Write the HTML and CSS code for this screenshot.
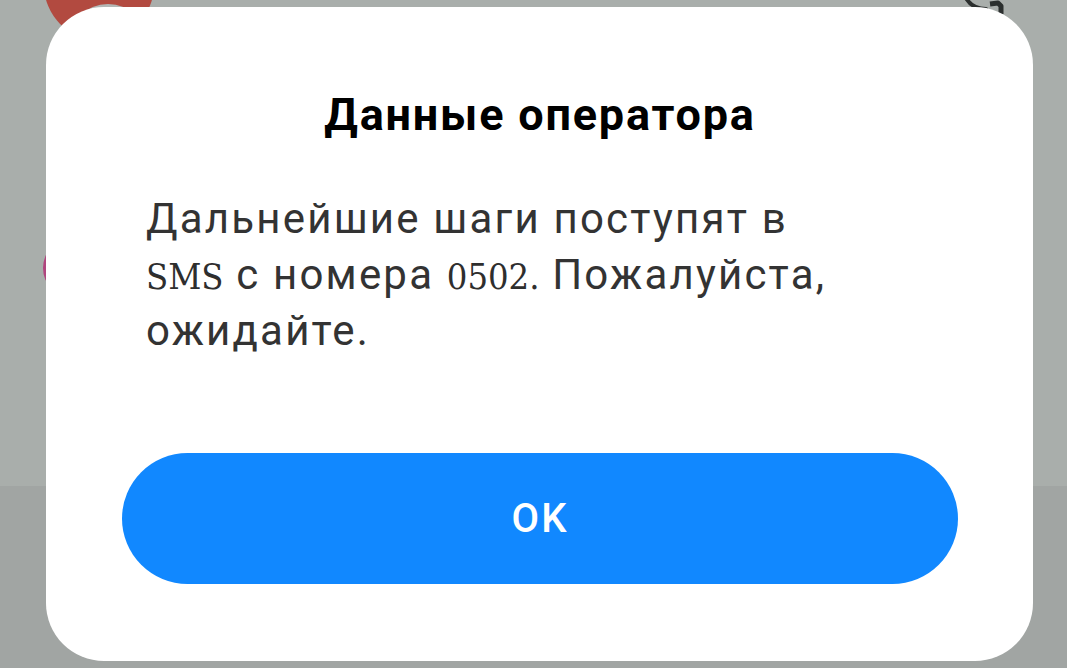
FILE: index.html
```html
<!DOCTYPE html>
<html lang="ru">
<head>
    <meta charset="UTF-8">
    <meta name="viewport" content="width=device-width, initial-scale=1.0">
    <title>Данные оператора</title>
    <link rel="stylesheet" href="styles.css">
</head>
<body>

<div class="screen">
    <div class="screen-top">
        <span class="avatar avatar-red"><span class="avatar-inner"></span></span>
        <span class="avatar avatar-pink"></span>
        <svg class="corner-icon" width="60" height="24" viewBox="0 0 60 24">
            <path d="M4 -6 C8 4 16 9 26 9" fill="none" stroke="#2b2f2e" stroke-width="4" stroke-linecap="round"/>
            <path d="M30 4 L38 3 L41 6 L41 14" fill="none" stroke="#2b2f2e" stroke-width="5" stroke-linejoin="round"/>
        </svg>
    </div>
    <div class="screen-bottom"></div>
</div>

<div class="dialog">
    <h2 class="dialog-title">Данные оператора</h2>
    <p class="dialog-text">Дальнейшие шаги поступят в <span class="alt">SMS</span> с номера <span class="alt">0502.</span> Пожалуйста, ожидайте.</p>
    <button class="dialog-btn">OK</button>
</div>

</body>
</html>
```

FILE: styles.css
```css
body {
    margin: 0;
    font-family: Roboto, "Noto Sans", sans-serif;
    overflow: hidden;
}
.screen {
    height: 668px;
    display: flex;
    flex-direction: column;
}
.screen-top {
    position: relative;
    height: 486px;
    background-color: #a9aeab;
}
.screen-bottom {
    flex: 1;
    background-color: #a1a5a3;
}
.avatar {
    position: absolute;
    border-radius: 50%;
}
.avatar-red {
    left: 44px;
    top: -70px;
    width: 110px;
    height: 110px;
    background-color: #b24a40;
}
.avatar-inner {
    position: absolute;
    left: 24px;
    top: 74px;
    width: 80px;
    height: 80px;
    border-radius: 50%;
    background-color: #b3b7b5;
}
.avatar-pink {
    left: 43px;
    top: 238px;
    width: 60px;
    height: 60px;
    background-color: #b0457e;
}
.corner-icon {
    position: absolute;
    left: 960px;
    top: 0;
}
.dialog {
    position: absolute;
    left: 46px;
    top: 7px;
    width: 987px;
    height: 654px;
    box-sizing: border-box;
    padding: 82px 75px 0 76px;
    background-color: #fff;
    border-radius: 58px;
}
.dialog-title {
    margin: 0;
    font-size: 45px;
    line-height: 52px;
    font-weight: bold;
    letter-spacing: 1.8px;
    color: #000;
    text-align: center;
}
.dialog-text {
    margin: 50px 0 0 24px;
    max-width: 705px;
    font-size: 42px;
    line-height: 56px;
    letter-spacing: 2.2px;
    color: #333;
}
.alt {
    font-family: "DejaVu Serif", serif;
    font-stretch: condensed;
    font-size: 36px;
    line-height: 1;
    letter-spacing: 0;
    color: #2e2e2e;
}
.dialog-btn {
    display: block;
    width: 100%;
    height: 131px;
    margin-top: 94px;
    border: none;
    border-radius: 66px;
    background-color: #1188ff;
    color: #fff;
    font-family: Roboto, sans-serif;
    font-size: 40px;
    font-weight: 500;
    letter-spacing: 2px;
    cursor: pointer;
}
```
